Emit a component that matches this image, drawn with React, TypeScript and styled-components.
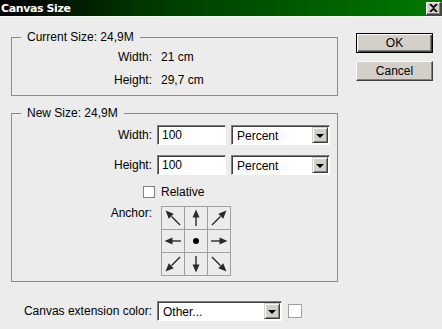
import React from "react";
import styled, { createGlobalStyle } from "styled-components";

const GlobalStyle = createGlobalStyle`
  html, body {
    margin: 0;
    padding: 0;
    background: #ececec;
  }
  body {
    font-family: "Liberation Sans", Arial, sans-serif;
    font-size: 12px;
    color: #000;
  }
`;

const ANCHORS = [-45, 0, 45, -90, null, 90, -135, 180, 135];

export default function App() {
  return (
    <Window>
      <GlobalStyle />
      <TitleBar>
        <Title>Canvas Size</Title>
        <CloseButton>
          <svg width="9" height="8" viewBox="0 0 9 8">
            <path d="M1 0 L4.5 3.3 L8 0 M1 8 L4.5 4.7 L8 8" stroke="#000" strokeWidth="1.8" fill="none" />
          </svg>
        </CloseButton>
      </TitleBar>
      <Body>
        <LeftColumn>
          <Group>
            <Legend>Current Size: 24,9M</Legend>
            <Rows $top={3} $bottom={5} $gap={3}>
              <FieldRow>
                <Label>Width:</Label>
                <Value>21 cm</Value>
              </FieldRow>
              <FieldRow>
                <Label>Height:</Label>
                <Value>29,7 cm</Value>
              </FieldRow>
            </Rows>
          </Group>

          <Group $spaced>
            <Legend>New Size: 24,9M</Legend>
            <Rows $top={5} $bottom={5} $gap={10}>
              <FieldRow>
                <Label>Width:</Label>
                <Controls>
                  <TextInput defaultValue="100" />
                  <Select $width={99} value="Percent" />
                </Controls>
              </FieldRow>
              <FieldRow>
                <Label>Height:</Label>
                <Controls>
                  <TextInput defaultValue="100" />
                  <Select $width={99} value="Percent" />
                </Controls>
              </FieldRow>
              <CheckRow>
                <CheckBox type="checkbox" />
                <span>Relative</span>
              </CheckRow>
              <AnchorRow>
                <Label>Anchor:</Label>
                <AnchorGrid>
                  {ANCHORS.map((angle, i) => (
                    <AnchorCell key={i}>
                      {angle === null ? (
                        <Dot />
                      ) : (
                        <svg width="22" height="22" viewBox="0 0 22 22">
                          <g transform={`rotate(${angle} 11 11)`}>
                            <line
                              x1="11"
                              y1={angle % 90 === 0 ? 19 : 21}
                              x2="11"
                              y2="9"
                              stroke="#2a2a2a"
                              strokeWidth="1.4"
                            />
                            <polygon
                              points={angle % 90 === 0 ? "11,2.5 7.5,10.5 14.5,10.5" : "11,0.5 7.5,8.5 14.5,8.5"}
                              fill="#2a2a2a"
                            />
                          </g>
                        </svg>
                      )}
                    </AnchorCell>
                  ))}
                </AnchorGrid>
              </AnchorRow>
            </Rows>
          </Group>

          <BottomRow>
            <BottomLabel>Canvas extension color:</BottomLabel>
            <Select $width={125} value="Other..." />
            <Swatch />
          </BottomRow>
        </LeftColumn>

        <RightColumn>
          <Button $primary>OK</Button>
          <Button>Cancel</Button>
        </RightColumn>
      </Body>
    </Window>
  );
}

const Select: React.FC<{ $width: number; value: string }> = ({ $width, value }) => (
  <SelectBox $width={$width}>
    <SelectText>{value}</SelectText>
    <DropButton>
      <DownTriangle />
    </DropButton>
  </SelectBox>
);

const Window = styled.div`
  width: 442px;
  height: 329px;
  overflow: hidden;
  background: #ececec;
`;

const TitleBar = styled.div`
  height: 16px;
  display: flex;
  align-items: center;
  justify-content: space-between;
  padding: 0 1px 0 1px;
  background: linear-gradient(to right, #000000 0%, #003a00 35%, #007a00 100%);
  border-bottom: 1px solid #f8f8f8;
`;

const Title = styled.div`
  color: #fff;
  font-family: "DejaVu Sans", Tahoma, sans-serif;
  font-weight: bold;
  font-size: 11px;
  letter-spacing: -0.4px;
`;

const CloseButton = styled.div`
  width: 13px;
  height: 11px;
  display: flex;
  align-items: center;
  justify-content: center;
  background: #d4d0c8;
  border: 1px solid;
  border-color: #fff #404040 #404040 #fff;
  box-shadow: inset -1px -1px 0 #808080;
`;

const Body = styled.div`
  display: flex;
  padding-left: 11px;
`;

const LeftColumn = styled.div`
  width: 327px;
  padding-top: 13px;
  display: flex;
  flex-direction: column;
`;

const RightColumn = styled.div`
  margin-left: 18px;
  padding-top: 16px;
  width: 77px;
  display: flex;
  flex-direction: column;
  gap: 8px;
`;

const Group = styled.fieldset<{ $spaced?: boolean }>`
  margin: ${(p) => (p.$spaced ? "10px" : "0")} 0 0 0;
  padding: 0;
  min-width: 0;
  border: 1px solid #8c8c8c;
  border-radius: 0;
`;

const Legend = styled.legend`
  margin-left: 9px;
  padding: 0 6px;
  line-height: 14px;
  height: 14px;
`;

const Rows = styled.div<{ $top: number; $bottom: number; $gap: number }>`
  display: flex;
  flex-direction: column;
  gap: ${(p) => p.$gap}px;
  padding: ${(p) => p.$top}px 0 ${(p) => p.$bottom}px 0;
`;

const FieldRow = styled.div`
  display: grid;
  grid-template-columns: 140px auto;
  column-gap: 5px;
  align-items: center;
  height: 20px;
`;

const Label = styled.div`
  text-align: right;
  white-space: nowrap;
`;

const Value = styled.div`
  padding-left: 4px;
`;

const Controls = styled.div`
  display: flex;
  gap: 5px;
`;

const TextInput = styled.input`
  box-sizing: border-box;
  width: 69px;
  height: 20px;
  margin: 0;
  padding: 0 0 0 4px;
  font: inherit;
  font-size: 12px;
  color: #000;
  background: #fff;
  border: 1px solid;
  border-color: #808080 #fff #fff #808080;
  box-shadow: inset 1px 1px 0 #404040;
  outline: none;
`;

const SelectBox = styled.div<{ $width: number }>`
  box-sizing: border-box;
  width: ${(p) => p.$width}px;
  height: 20px;
  display: flex;
  align-items: center;
  background: #fff;
  border: 1px solid;
  border-color: #808080 #fff #fff #808080;
  box-shadow: inset 1px 1px 0 #404040;
  padding: 1px 1px 1px 2px;
`;

const SelectText = styled.span`
  flex: 1;
  padding-left: 3px;
  padding-top: 1px;
`;

const DropButton = styled.div`
  box-sizing: border-box;
  width: 16px;
  height: 16px;
  display: flex;
  align-items: center;
  justify-content: center;
  background: #d4d0c8;
  border: 1px solid;
  border-color: #d4d0c8 #404040 #404040 #d4d0c8;
  box-shadow: inset 1px 1px 0 #fff, inset -1px -1px 0 #808080;
`;

const DownTriangle = styled.div`
  width: 0;
  height: 0;
  border-left: 4px solid transparent;
  border-right: 4px solid transparent;
  border-top: 4px solid #000;
  margin-top: 1px;
`;

const CheckRow = styled.div`
  display: flex;
  align-items: center;
  gap: 6px;
  height: 14px;
  padding-left: 131px;
`;

const CheckBox = styled.input`
  appearance: none;
  box-sizing: border-box;
  width: 12px;
  height: 12px;
  margin: 0;
  background: #fff;
  border: 1px solid #808080;
`;

const AnchorRow = styled.div`
  display: grid;
  grid-template-columns: 140px auto;
  column-gap: 9px;
  align-items: start;
  margin-top: -3px;
`;

const AnchorGrid = styled.div`
  display: grid;
  grid-template-columns: repeat(3, 22px);
  grid-template-rows: repeat(3, 22px);
  gap: 1px;
  padding: 1px;
  background: #a0a0a0;
  width: max-content;
`;

const AnchorCell = styled.div`
  background: #ececec;
  display: flex;
  align-items: center;
  justify-content: center;
`;

const Dot = styled.div`
  width: 6px;
  height: 6px;
  border-radius: 50%;
  background: #000;
`;

const BottomRow = styled.div`
  display: flex;
  align-items: center;
  margin-top: 19px;
  height: 20px;
`;

const BottomLabel = styled.div`
  width: 141px;
  margin-right: 5px;
  text-align: right;
  white-space: nowrap;
`;

const Swatch = styled.div`
  box-sizing: border-box;
  width: 14px;
  height: 14px;
  margin-left: 6px;
  background: #fff;
  border: 1px solid #a0a0a0;
`;

const Button = styled.div<{ $primary?: boolean }>`
  box-sizing: border-box;
  height: 20px;
  display: flex;
  align-items: center;
  justify-content: center;
  background: #d4d0c8;
  border: 1px solid;
  border-color: ${(p) => (p.$primary ? "#000" : "#fff #404040 #404040 #fff")};
  box-shadow: ${(p) =>
    p.$primary
      ? "inset 1px 1px 0 #fff, inset -1px -1px 0 #404040, inset -2px -2px 0 #808080"
      : "inset -1px -1px 0 #808080"};
`;
